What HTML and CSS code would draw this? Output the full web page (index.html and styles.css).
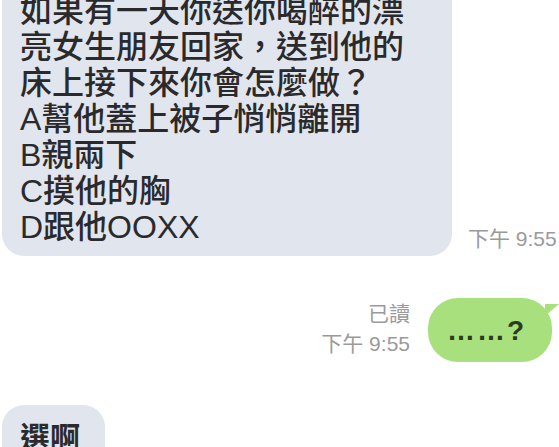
FILE: index.html
```html
<!DOCTYPE html>
<html lang="zh-Hant">
<head>
    <meta charset="UTF-8">
    <title>Chat</title>
    <link rel="stylesheet" href="styles.css">
</head>
<body>

    <div class="chat">
        <div class="row incoming">
            <div class="bubble gray">
                如果有一天你送你喝醉的漂<br>
                亮女生朋友回家，送到他的<br>
                床上接下來你會怎麼做？<br>
                A幫他蓋上被子悄悄離開<br>
                B親兩下<br>
                C摸他的胸<br>
                D跟他OOXX
            </div>
            <div class="meta">
                <span class="time">下午 9:55</span>
            </div>
        </div>

        <div class="row outgoing">
            <div class="meta right">
                <span class="read">已讀</span>
                <span class="time">下午 9:55</span>
            </div>
            <div class="bubble green">……?</div>
        </div>

        <div class="row incoming">
            <div class="bubble gray short">選啊</div>
            <div class="meta">
                <span class="time">下午 9:56</span>
            </div>
        </div>
    </div>

</body>
</html>
```

FILE: styles.css
```css
body {
    margin: 0;
    width: 559px;
    height: 447px;
    overflow: hidden;
    background: #ffffff;
    font-family: "Liberation Sans", "Noto Sans CJK TC", sans-serif;
}

.chat {
    display: flex;
    flex-direction: column;
    margin-top: -21px;
    padding-left: 2px;
}

.row {
    display: flex;
    align-items: flex-end;
}

.incoming {
    gap: 16px;
}

.outgoing {
    justify-content: flex-end;
    gap: 18px;
    margin-top: 42px;
    padding-right: 7px;
}

.bubble {
    border-radius: 22px;
    color: #2a2a2c;
}

.gray {
    background-color: #e1e5ee;
    width: 432px;
    padding: 14px 0 11px 18px;
    font-size: 32px;
    line-height: 36px;
    font-weight: 500;
    white-space: nowrap;
}

.short {
    width: auto;
    margin-top: 43px;
    padding: 15px 25px 26px 18px;
    font-size: 30px;
    font-weight: bold;
}

.green {
    position: relative;
    background-color: #a7e07c;
    width: 124px;
    height: 64px;
    border-radius: 30px;
    box-sizing: border-box;
    padding-left: 19px;
    font-size: 28px;
    line-height: 66px;
    font-weight: bold;
    color: #2b3a20;
    letter-spacing: 2px;
    white-space: nowrap;
}

.green::after {
    content: "";
    position: absolute;
    right: -7px;
    top: 6px;
    border-left: 14px solid #a7e07c;
    border-bottom: 12px solid transparent;
}

.meta {
    display: flex;
    flex-direction: column;
    padding-bottom: 2px;
    white-space: nowrap;
}

.meta.right {
    align-items: flex-end;
    padding-bottom: 3px;
}

.time, .read {
    font-size: 21px;
    line-height: 30px;
    color: #9a9a9c;
}

.read {
    font-size: 21px;
}
```
